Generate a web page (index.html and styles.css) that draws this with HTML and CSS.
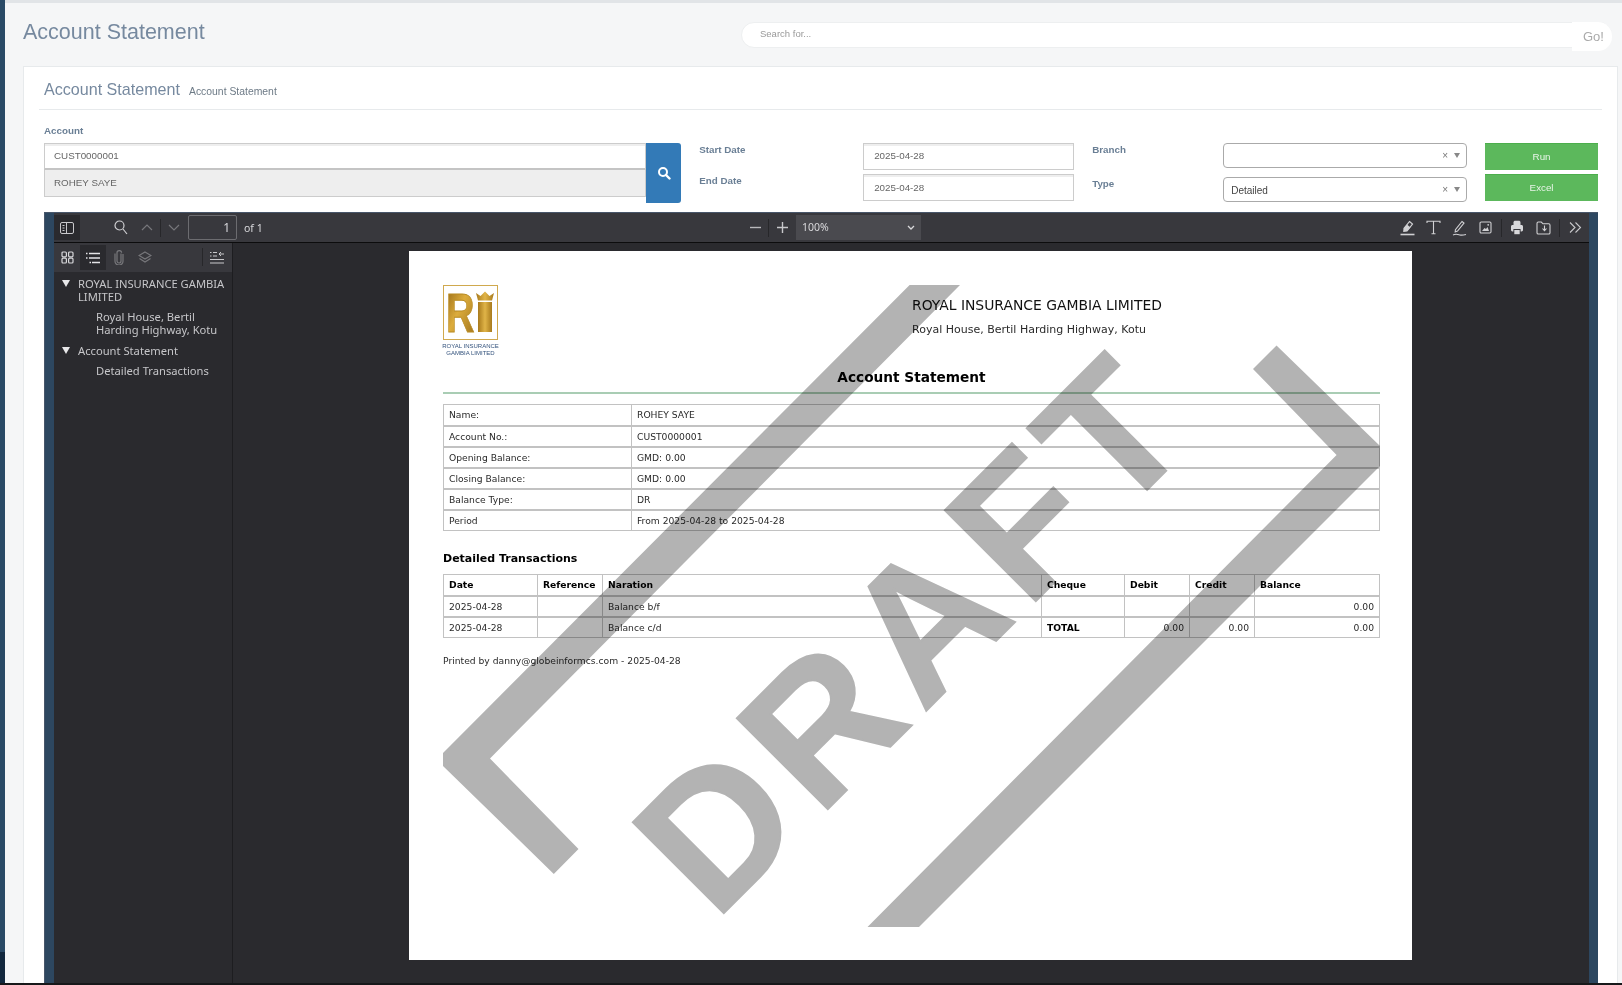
FILE: index.html
```html
<!DOCTYPE html>
<html lang="en">
<head>
    <meta charset="UTF-8">
    <title>Account Statement</title>
    <link rel="stylesheet" href="styles.css">
</head>
<body>
    <div class="layout">
        <div class="nav-strip"></div>
        <div class="content">
            <div class="page-heading">
                <h2>Account Statement</h2>
                <div class="search-box">
                    <div class="search-input">Search for...</div>
                    <div class="search-go">Go!</div>
                </div>
            </div>

            <div class="card">
                <div class="card-title">
                    <h3>Account Statement</h3>
                    <small>Account Statement</small>
                </div>

                <div class="form-area">
                    <label class="field-label account-label">Account</label>
                    <div class="form-row">
                        <div class="account-group">
                            <div class="account-inputs">
                                <div class="text-input">CUST0000001</div>
                                <div class="text-input readonly">ROHEY SAYE</div>
                            </div>
                            <div class="lookup-btn">
                                <svg width="14" height="14" viewBox="0 0 14 14"><circle cx="6" cy="6" r="4" fill="none" stroke="#fff" stroke-width="2"/><path d="M9 9l3.5 3.5" stroke="#fff" stroke-width="2.4" stroke-linecap="round"/></svg>
                            </div>
                        </div>
                        <div class="date-group">
                            <label class="field-label">Start Date</label>
                            <div class="text-input">2025-04-28</div>
                            <label class="field-label end-label">End Date</label>
                            <div class="text-input">2025-04-28</div>
                        </div>
                        <div class="select-group">
                            <label class="field-label">Branch</label>
                            <div class="select-input"><span></span><i>×</i><b></b></div>
                            <label class="field-label type-label">Type</label>
                            <div class="select-input"><span>Detailed</span><i>×</i><b></b></div>
                        </div>
                        <div class="button-group">
                            <div class="green-btn">Run</div>
                            <div class="green-btn">Excel</div>
                        </div>
                    </div>
                </div>

                <div class="viewer">
                    <div class="viewer-inner">
                        <div class="toolbar">
                            <div class="toolbar-left">
                                <div class="tool-btn active sidebar-toggle">
                                    <svg width="16" height="14" viewBox="0 0 16 14" fill="none" stroke="#c8c8cb"><rect x="1.5" y="1.5" width="13" height="11" rx="1.5"/><path d="M7.5 1.5v11"/><path d="M3.5 4.5h2M3.5 7h2M3.5 9.5h2"/></svg>
                                </div>
                                <div class="tool-icon find-icon">
                                    <svg width="14" height="15" viewBox="0 0 14 15" fill="none" stroke="#d0d0d3" stroke-width="1.2"><circle cx="5.5" cy="5.5" r="4.5"/><path d="M9 9l4 5"/></svg>
                                </div>
                                <div class="tool-icon prev-icon">
                                    <svg width="12" height="7" viewBox="0 0 12 7" fill="none" stroke="#77777b" stroke-width="1.2"><path d="M1 6l5-5 5 5"/></svg>
                                </div>
                                <div class="tool-sep"></div>
                                <div class="tool-icon next-icon">
                                    <svg width="12" height="7" viewBox="0 0 12 7" fill="none" stroke="#77777b" stroke-width="1.2"><path d="M1 1l5 5 5-5"/></svg>
                                </div>
                                <div class="page-number">1</div>
                                <div class="page-total">of 1</div>
                            </div>
                            <div class="toolbar-center">
                                <div class="tool-icon">
                                    <svg width="11" height="11" viewBox="0 0 11 11" stroke="#b8b8bb" stroke-width="1.4"><path d="M0 5.5h11"/></svg>
                                </div>
                                <div class="tool-sep"></div>
                                <div class="tool-icon">
                                    <svg width="11" height="11" viewBox="0 0 11 11" stroke="#c8c8cb" stroke-width="1.4"><path d="M0 5.5h11M5.5 0v11"/></svg>
                                </div>
                                <div class="zoom-select">100%
                                    <svg width="8" height="5" viewBox="0 0 8 5" fill="none" stroke="#d8d8db" stroke-width="1.3"><path d="M1 1l3 3 3-3"/></svg>
                                </div>
                            </div>
                            <div class="toolbar-right">
                                <div class="tool-icon">
                                    <svg width="15" height="16" viewBox="0 0 15 16" fill="none" stroke="#d0d0d3" stroke-width="1.2"><path d="M9.5 1.5l3 2.5-5.5 7-3.2.3.3-3z"/><path d="M7 4.500l3.500 3-3.500 3.500-3.200.3.300-3z" fill="#d0d0d3" stroke="none"/><path d="M0.5 14.5h14" stroke-width="1.6"/></svg>
                                </div>
                                <div class="tool-icon">
                                    <svg width="15" height="15" viewBox="0 0 15 15" fill="none" stroke="#d0d0d3" stroke-width="1.1"><path d="M1 3V1.2h13V3M7.5 1.2v12.6M5.5 13.8h4"/></svg>
                                </div>
                                <div class="tool-icon">
                                    <svg width="15" height="16" viewBox="0 0 15 16" fill="none" stroke="#d0d0d3" stroke-width="1.1"><path d="M10 1.5l2 1.5-6.5 8-2.3 1 .2-2.4z"/><path d="M1 15c3-1.5 5-.5 7 0s4 0 6-.5"/></svg>
                                </div>
                                <div class="tool-icon">
                                    <svg width="13" height="13" viewBox="0 0 13 13" fill="none" stroke="#d0d0d3" stroke-width="1.1"><rect x="1" y="1" width="11" height="11" rx="1.2"/><path d="M3 10l2.5-3 1.5 1 1.5-2 1.5 4z" fill="#d0d0d3" stroke="none"/><circle cx="9.2" cy="3.8" r=".9" fill="#d0d0d3" stroke="none"/></svg>
                                </div>
                                <div class="tool-sep right-sep"></div>
                                <div class="tool-icon">
                                    <svg width="14" height="15" viewBox="0 0 14 15" fill="#d8d8db"><path d="M3.5 5V2.5C3.5 1.3 4.3.8 5.2.8h3.6c.9 0 1.7.5 1.7 1.700V5z"/><path d="M1 6.5C1 5.6 1.6 5 2.5 5h9c.9 0 1.5.6 1.5 1.5V10a1.4 1.4 0 0 1-1.4 1.4h-1V9H3.400v2.400h-1A1.400 1.400 0 0 1 1 10z"/><path d="M4.300 10h5.400v4.200H4.300z"/></svg>
                                </div>
                                <div class="tool-icon">
                                    <svg width="15" height="14" viewBox="0 0 15 14" fill="none" stroke="#d0d0d3" stroke-width="1.1"><path d="M1 2.500C1 1.700 1.500 1 2.300 1h3l1.700 1.800h5.700c.8 0 1.300.7 1.300 1.400v7.500c0 .8-.5 1.300-1.300 1.300H2.300C1.500 13 1 12.500 1 11.700z"/><path d="M8.500 4.500v5M6.500 7.500l2 2.200 2-2.200"/></svg>
                                </div>
                                <div class="tool-sep right-sep"></div>
                                <div class="tool-icon">
                                    <svg width="13" height="11" viewBox="0 0 13 11" fill="none" stroke="#c8c8cb" stroke-width="1.1"><path d="M1 .5l5 5-5 5M6.500 .5l5 5-5 5"/></svg>
                                </div>
                            </div>
                        </div>

                        <div class="viewer-main">
                            <div class="sidebar">
                                <div class="sidebar-tools">
                                    <div class="tool-btn side-btn">
                                        <svg width="13" height="13" viewBox="0 0 13 13" fill="none" stroke="#d8d8db" stroke-width="1.2"><rect x="1" y="1" width="4.400" height="4.800" rx="1"/><rect x="7.600" y="1" width="4.400" height="4.800" rx="1"/><rect x="1" y="7.200" width="4.400" height="4.800" rx="1"/><rect x="7.600" y="7.200" width="4.400" height="4.800" rx="1"/></svg>
                                    </div>
                                    <div class="tool-btn side-btn active">
                                        <svg width="14" height="12" viewBox="0 0 14 12" stroke="#e4e4e7" stroke-width="1.300"><path d="M0 1.500h1.500M3 1.500h11M0 6h1.500M3 6h11M3.500 10.500H5M6 10.500h8"/></svg>
                                    </div>
                                    <div class="tool-btn side-btn">
                                        <svg width="10" height="15" viewBox="0 0 10 15" fill="none" stroke="#77777b" stroke-width="1.2"><path d="M7 3.500v7.500a2 2 0 0 1-4 0V3a2.300 2.300 0 0 1 4.600-.2"/><path d="M9 4v7.200a4 4 0 0 1-8 0V3.500"/></svg>
                                    </div>
                                    <div class="tool-btn side-btn">
                                        <svg width="14" height="13" viewBox="0 0 14 13" fill="none" stroke="#77777b" stroke-width="1.2"><path d="M7 1l6 3.500L7 8 1 4.500z"/><path d="M1.500 7.500L7 11l5.500-3.500"/></svg>
                                    </div>
                                    <div class="tool-sep side-sep"></div>
                                    <div class="tool-btn side-btn">
                                        <svg width="14" height="13" viewBox="0 0 14 13" stroke="#c8c8cb" stroke-width="1.2" fill="none"><path d="M0 1.500h1.500M3 1.500h4M0 5h1.500M3 5h4M0 8.500h14M0 12h14"/><path d="M14 3H9M11 1L9 3l2 2" stroke-width="1"/></svg>
                                    </div>
                                </div>
                                <div class="outline">
                                    <div class="outline-item"><span class="caret"></span>ROYAL INSURANCE GAMBIA LIMITED</div>
                                    <div class="outline-item child">Royal House, Bertil Harding Highway, Kotu</div>
                                    <div class="outline-item"><span class="caret"></span>Account Statement</div>
                                    <div class="outline-item child">Detailed Transactions</div>
                                </div>
                            </div>

                            <div class="canvas">
                                <div class="pdf-page">
                                    <div class="pdf-header">
                                        <div class="pdf-logo">
                                            <svg class="logo-svg" width="55" height="72" viewBox="0 0 55 72">
                                                <defs>
                                                    <linearGradient id="gold" x1="0" y1="0" x2="1" y2="1">
                                                        <stop offset="0" stop-color="#8f6210"/>
                                                        <stop offset=".45" stop-color="#dcac3c"/>
                                                        <stop offset="1" stop-color="#9a6e18"/>
                                                    </linearGradient>
                                                    <linearGradient id="goldBar" x1="0" y1="0" x2="1" y2="0">
                                                        <stop offset="0" stop-color="#a87a1c"/>
                                                        <stop offset=".5" stop-color="#e0b448"/>
                                                        <stop offset="1" stop-color="#a87a1c"/>
                                                    </linearGradient>
                                                </defs>
                                                <rect x=".5" y=".5" width="54" height="54" fill="#fff" stroke="#d0a94e"/>
                                                <g fill="url(#gold)" stroke="#b98c24" stroke-width=".8"><text transform="translate(3,47) scale(.72,1)" class="logo-mark">R</text></g>
                                                <rect x="35" y="17" width="14" height="30" fill="url(#goldBar)"/>
                                                <path d="M33 8l4.500 3 4.500-4.500 4.500 4.500 4.500-3-2 7.500h-14z" fill="url(#goldBar)"/>
                                                <text x="27.500" y="63" class="logo-text">ROYAL INSURANCE</text>
                                                <text x="27.500" y="70" class="logo-text">GAMBIA LIMITED</text>
                                            </svg>
                                        </div>
                                        <div class="pdf-company">
                                            <div class="company-name">ROYAL INSURANCE GAMBIA LIMITED</div>
                                            <div class="company-address">Royal House, Bertil Harding Highway, Kotu</div>
                                        </div>
                                    </div>
                                    <div class="pdf-title">Account Statement</div>
                                    <table class="pdf-table info-table">
                                        <colgroup><col class="col-info"><col></colgroup>
                                        <tr><td>Name:</td><td>ROHEY SAYE</td></tr>
                                        <tr><td>Account No.:</td><td>CUST0000001</td></tr>
                                        <tr><td>Opening Balance:</td><td>GMD: 0.00</td></tr>
                                        <tr><td>Closing Balance:</td><td>GMD: 0.00</td></tr>
                                        <tr><td>Balance Type:</td><td>DR</td></tr>
                                        <tr><td>Period</td><td>From 2025-04-28 to 2025-04-28</td></tr>
                                    </table>
                                    <div class="pdf-subtitle">Detailed Transactions</div>
                                    <table class="pdf-table trans-table">
                                        <colgroup>
                                            <col class="col-date"><col class="col-ref"><col><col class="col-cheque">
                                            <col class="col-num"><col class="col-num"><col class="col-bal">
                                        </colgroup>
                                        <tr><th>Date</th><th>Reference</th><th>Naration</th><th>Cheque</th><th>Debit</th><th>Credit</th><th>Balance</th></tr>
                                        <tr><td>2025-04-28</td><td></td><td>Balance b/f</td><td></td><td></td><td></td><td class="num">0.00</td></tr>
                                        <tr><td>2025-04-28</td><td></td><td>Balance c/d</td><td class="strong">TOTAL</td><td class="num">0.00</td><td class="num">0.00</td><td class="num">0.00</td></tr>
                                    </table>
                                    <div class="pdf-footer">Printed by danny@globeinformcs.com - 2025-04-28</div>

                                    <!-- watermark sits over the page, coords are screen coords -->
                                    <svg class="watermark" width="1003" height="709" viewBox="409 251 1003 709">
                                        <polygon points="443,753 909.600,285 960,285 490,758.500 578.500,849 553.800,874 443,766"/>
                                        <polygon points="867.500,927 919,927 1380,466 1380,446 1276.500,345.600 1253,369 1336.600,455"/>
                                        <text transform="translate(715,922) rotate(-45)" class="watermark-text">DRAFT</text>
                                    </svg>
                                </div>
                            </div>
                        </div>
                    </div>
                </div>
            </div>
        </div>
    </div>
    <div class="bottom-bar"></div>
</body>
</html>
```

FILE: styles.css
```css
* {
    box-sizing: border-box;
}

html, body {
    height: 985px;
}

body {
    margin: 0;
    overflow: hidden;
    display: flex;
    flex-direction: column;
    font-family: "Liberation Sans", Arial, sans-serif;
    background-color: #f5f6f7;
}

.layout {
    flex: 1;
    display: flex;
    min-height: 0;
}

.nav-strip {
    width: 5px;
    background: linear-gradient(#2a4a66 0, #2a4a66 952px, #12283e 952px);
}

.content {
    flex: 1;
    min-width: 0;
    overflow: hidden;
    border-top: 3px solid #e1e4e7;
    padding-left: 18px;
    padding-right: 4px;
}

.bottom-bar {
    height: 2px;
    background-color: #17181a;
}

/* page heading */
.page-heading {
    height: 63px;
    display: flex;
    justify-content: space-between;
    padding-top: 19px;
    padding-right: 6px;
}

.page-heading h2 {
    margin: 0;
    font-size: 21.5px;
    font-weight: normal;
    line-height: 20px;
    color: #76899f;
}

.search-box {
    width: 871px;
    height: 29px;
    position: relative;
}

.search-input {
    width: 100%;
    height: 26px;
    padding-left: 18px;
    font-size: 9.5px;
    line-height: 22px;
    color: #999;
    background-color: #fff;
    border: 1px solid #edeff0;
    border-radius: 13px;
}

.search-go {
    position: absolute;
    right: 0;
    top: 0;
    width: 40px;
    height: 29px;
    padding-left: 11px;
    font-size: 13px;
    line-height: 30px;
    color: #aaa;
    background-color: #fff;
    border-radius: 0 14px 14px 0;
}

/* card */
.card {
    height: 920px;
    background-color: #fff;
    border: 1px solid #e7eaec;
    padding: 0 15px 0 15px;
}

.card-title {
    height: 43px;
    padding: 13px 0 0 5px;
    display: flex;
    align-items: baseline;
    gap: 9px;
    border-bottom: 1px solid #e7eaec;
}

.card-title h3 {
    margin: 0;
    font-size: 16.1px;
    font-weight: normal;
    line-height: 18px;
    color: #76899f;
}

.card-title small {
    font-size: 10.4px;
    color: #6d7a86;
}

.form-area {
    padding: 15px 4px 0 5px;
}

.field-label {
    display: block;
    font-size: 9.8px;
    font-weight: bold;
    line-height: 12px;
    color: #6a7f95;
}

.account-label {
    margin-bottom: 6px;
}

.form-row {
    display: flex;
    height: 60px;
    gap: 18px;
}

.account-group {
    width: 638px;
    display: flex;
}

.account-inputs {
    flex: 1;
}

.text-input {
    height: 27px;
    padding-left: 9px;
    font-size: 9.8px;
    line-height: 25px;
    color: #666;
    background-color: #fff;
    border: 1px solid #ccc;
    box-shadow: inset 0 2px 0 #eee;
}

.account-inputs .text-input:first-child {
    line-height: 24px;
    border-bottom: 2px solid #c4c4c4;
}

.text-input.readonly {
    border-top: 0;
    background-color: #eee;
    box-shadow: none;
}

.lookup-btn {
    width: 35px;
    display: flex;
    align-items: center;
    justify-content: center;
    background-color: #337ab7;
    border-radius: 0 3px 3px 0;
}

.date-group {
    width: 375px;
    display: grid;
    grid-template-columns: 164px 211px;
    grid-template-rows: 27px 27px;
    row-gap: 4px;
}

.date-group .text-input {
    padding-left: 10px;
}

.date-group .text-input:nth-child(2) {
    line-height: 24px;
}

.date-group .field-label {
    padding-top: 1px;
}

.select-group {
    width: 375px;
    display: grid;
    grid-template-columns: 131px 244px;
    grid-template-rows: 25px 25px;
    row-gap: 9px;
}

.select-group .field-label {
    padding-top: 1px;
}

.select-input {
    display: flex;
    align-items: center;
    padding: 0 6px 0 7px;
    font-size: 10px;
    color: #444;
    background-color: #fff;
    border: 1px solid #aaa;
    border-radius: 4px;
}

.select-input span {
    flex: 1;
    padding-top: 2px;
}

.select-input i {
    font-style: normal;
    font-size: 10px;
    color: #777;
    margin-right: 6px;
}

.select-input b {
    width: 0;
    height: 0;
    border-left: 3px solid transparent;
    border-right: 3px solid transparent;
    border-top: 5px solid #888;
}

.button-group {
    width: 113px;
    display: flex;
    flex-direction: column;
    gap: 4px;
}

.green-btn {
    height: 27px;
    font-size: 9.8px;
    line-height: 25px;
    text-align: center;
    color: #e8f5e8;
    background-color: #5cb85c;
    border-top: 1px solid #4cae4c;
}

/* pdf viewer */
.viewer {
    margin: 9px 4px 0 5px;
    height: 800px;
    background-color: #2d4760;
    border-top: 1px solid #48566a;
    border-left: 1px solid #48566a;
    padding: 0 9px 0 9px;
}

.viewer-inner {
    height: 100%;
    display: flex;
    flex-direction: column;
    background-color: #2a2a2e;
}

.toolbar {
    height: 30px;
    flex: none;
    display: flex;
    justify-content: space-between;
    align-items: center;
    background-color: #38383d;
    border-bottom: 1px solid #0c0c0d;
    position: relative;
}

.toolbar-left,
.toolbar-center,
.toolbar-right {
    display: flex;
    align-items: center;
    height: 25px;
}

.toolbar-center {
    position: absolute;
    left: 688px;
    top: 2px;
}

.toolbar-right {
    padding-right: 1px;
}

.tool-btn {
    display: flex;
    align-items: center;
    justify-content: center;
}

.tool-btn.active {
    background-color: #2a2a2e;
}

.sidebar-toggle {
    width: 26px;
    height: 25px;
}

.tool-icon {
    width: 26px;
    height: 25px;
    display: flex;
    align-items: center;
    justify-content: center;
}

.find-icon {
    margin-left: 28px;
}

.tool-sep {
    width: 1px;
    height: 18px;
    background-color: #27272a;
    flex: none;
}

.right-sep {
    margin: 0 2.5px;
}

.page-number {
    width: 49px;
    height: 25px;
    margin-left: 1px;
    padding-right: 6px;
    text-align: right;
    font-family: "Noto Sans", sans-serif;
    font-size: 12px;
    line-height: 23px;
    color: #d8d8db;
    border: 1px solid #6c6c70;
    border-radius: 2px;
}

.page-total {
    margin-left: 7px;
    font-family: "Noto Sans", sans-serif;
    font-size: 10.5px;
    color: #d8d8db;
}

.zoom-select {
    width: 125px;
    height: 25px;
    margin-left: 1px;
    padding: 0 6px 1px;
    display: flex;
    align-items: center;
    justify-content: space-between;
    font-family: "Noto Sans", sans-serif;
    font-size: 10.5px;
    color: #d8d8db;
    background-color: #4a4a4f;
}

.viewer-main {
    flex: 1;
    display: flex;
    min-height: 0;
}

.sidebar {
    width: 179px;
    flex: none;
    background-color: #2a2a2e;
    border-right: 1px solid #1d1d20;
}

.sidebar-tools {
    height: 29px;
    padding: 2px 0 0 0;
    display: flex;
    align-items: flex-start;
    background-color: #38383d;
}

.side-btn {
    width: 26px;
    height: 25px;
}

.side-sep {
    margin: 3px 1px 0 44px;
}

.outline {
    padding: 5px 2px 0 24px;
    font-family: "Noto Sans", sans-serif;
    font-size: 11.2px;
    line-height: 13px;
    color: #c6c6c9;
}

.outline-item {
    position: relative;
    margin-bottom: 7px;
}

.outline-item.child {
    padding-left: 18px;
    margin-bottom: 8px;
}

.caret {
    position: absolute;
    left: -16px;
    top: 3px;
    width: 0;
    height: 0;
    border-left: 4px solid transparent;
    border-right: 4px solid transparent;
    border-top: 7px solid #e8e8ea;
}

.canvas {
    flex: 1;
    padding: 8px 0 0 176px;
}

/* the printed page */
.pdf-page {
    position: relative;
    width: 1003px;
    height: 709px;
    padding: 34px 32px 0 34px;
    background-color: #fff;
    font-family: "DejaVu Sans", sans-serif;
    color: #2a2a2a;
    overflow: hidden;
}

.pdf-header {
    display: flex;
    height: 72px;
}

.pdf-logo {
    width: 469px;
}

.logo-svg {
    overflow: visible;
}

.logo-mark {
    font-family: "Liberation Sans", sans-serif;
    font-size: 55px;
    font-weight: bold;
}

.logo-text {
    font-family: "Liberation Sans", sans-serif;
    font-size: 6px;
    text-anchor: middle;
    fill: #33527c;
}

.company-name {
    margin-top: 12px;
    font-size: 13.9px;
    line-height: 16px;
    color: #111;
}

.company-address {
    margin-top: 10px;
    font-size: 11px;
    line-height: 14px;
}

.pdf-title {
    margin-top: 10px;
    height: 27px;
    text-align: center;
    font-size: 13.7px;
    font-weight: bold;
    line-height: 20px;
    color: #000;
    border-bottom: 2px solid #a9cdb4;
}

.pdf-table {
    width: 100%;
    table-layout: fixed;
    border-collapse: collapse;
    font-size: 9.2px;
}

.pdf-table td,
.pdf-table th {
    height: 21px;
    padding: 0 5px;
    border: 1px solid #c2c2c2;
    text-align: left;
    white-space: nowrap;
}

.pdf-table tr + tr td {
    border-top: 2px solid #c2c2c2;
}

.pdf-table .num {
    text-align: right;
}

.pdf-table th,
.pdf-table .strong {
    font-weight: bold;
    color: #000;
}

.info-table {
    margin-top: 10px;
}

.col-info { width: 188px; }
.col-date { width: 94px; }
.col-ref { width: 65px; }
.col-cheque { width: 83px; }
.col-num { width: 65px; }
.col-bal { width: 125px; }

.pdf-subtitle {
    margin-top: 21px;
    font-size: 11px;
    font-weight: bold;
    line-height: 14px;
    color: #000;
}

.trans-table {
    margin-top: 8px;
}

.pdf-footer {
    margin-top: 16px;
    font-size: 9.2px;
    line-height: 14px;
}

.watermark {
    position: absolute;
    left: 0;
    top: 0;
    fill: #b3b3b3;
    mix-blend-mode: multiply;
}

.watermark-text {
    font-family: "Liberation Sans", sans-serif;
    font-size: 187px;
    font-weight: bold;
    letter-spacing: 12px;
    stroke: #b3b3b3;
    stroke-width: 2px;
}
```
